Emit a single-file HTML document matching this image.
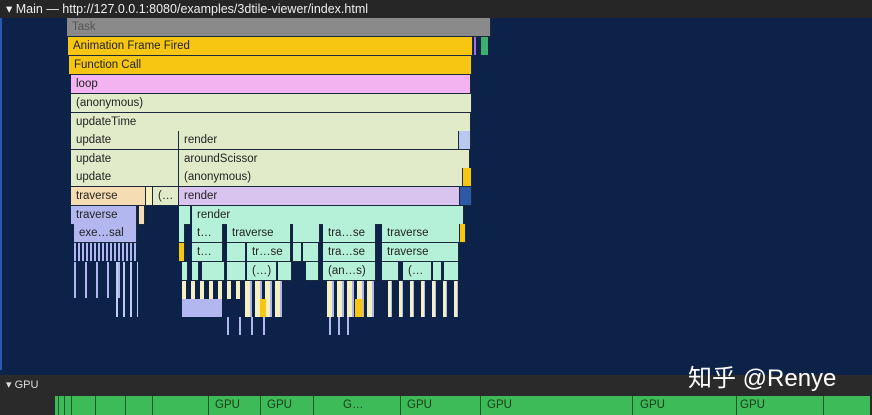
<!DOCTYPE html>
<html><head><meta charset="utf-8"><style>
body{margin:0;width:872px;height:415px;overflow:hidden;background:#0c2249;font-family:"Liberation Sans","Noto Sans CJK SC",sans-serif;position:relative}
.b{position:absolute;height:19px;box-sizing:border-box;border-right:1px solid #1a2a3a;border-bottom:1px solid #1a2a3a;font-size:11.5px;line-height:18px;color:#222;padding-left:5px;white-space:nowrap;overflow:hidden}
.v{position:absolute;width:2px}
.y{background:#f6c613}.g{background:#e2ebc9}.p{background:#f2b3f0}.l{background:#d9c3ef}.m{background:#b5f1d8}.t{background:#b3b7ef}.o{background:#f6dcb3}.c{background:#f4f0c0}
</style></head><body>
<div style="position:absolute;left:0;top:0;width:872px;height:18px;background:#262626;color:#eee;font-size:12.5px;line-height:18px;padding-left:6px">▾ Main — http://127.0.0.1:8080/examples/3dtile-viewer/index.html</div>
<div style="position:absolute;left:0;top:18px;width:2px;height:352px;background:#2a5ab0"></div>
<div class="b" style="left:67px;top:18px;width:424px;background:#8a8a8a;color:#555">Task</div>
<div class="b y" style="left:68px;top:37px;width:405px">Animation Frame Fired</div>
<div class="v" style="left:474px;top:37px;height:18px;background:#a070e0"></div>
<div class="v" style="left:481px;top:37px;height:18px;background:#3db070;width:7px"></div>
<div class="b y" style="left:69px;top:56px;width:403px">Function Call</div>
<div class="b p" style="left:71px;top:75px;width:400px">loop</div>
<div class="b g" style="left:71px;top:94px;width:401px">(anonymous)</div>
<div class="b g" style="left:71px;top:113px;width:400px">updateTime</div>
<div class="b g" style="left:71px;top:131px;width:108px">update</div>
<div class="b g" style="left:179px;top:131px;width:280px">render</div>
<div class="b" style="left:459px;top:131px;width:12px;background:#b8c8ee"></div>
<div class="b g" style="left:71px;top:150px;width:108px">update</div>
<div class="b g" style="left:179px;top:150px;width:291px">aroundScissor</div>
<div class="b g" style="left:71px;top:168px;width:108px">update</div>
<div class="b g" style="left:179px;top:168px;width:284px">(anonymous)</div>
<div class="b y" style="left:463px;top:168px;width:9px"></div>
<div class="b o" style="left:71px;top:187px;width:75px">traverse</div>
<div class="b c" style="left:146px;top:187px;width:7px"></div>
<div class="b g" style="left:153px;top:187px;width:26px">(…</div>
<div class="b l" style="left:179px;top:187px;width:281px">render</div>
<div class="b" style="left:460px;top:187px;width:12px;background:#2c5aa8"></div>
<div class="b t" style="left:71px;top:206px;width:66px">traverse</div>
<div class="b o" style="left:139px;top:206px;width:6px"></div>
<div class="b m" style="left:179px;top:206px;width:12px"></div>
<div class="b m" style="left:192px;top:206px;width:272px">render</div>
<div class="b t" style="left:74px;top:224px;width:63px">exe…sal</div>
<div class="b m" style="left:179px;top:224px;width:6px"></div>
<div class="b m" style="left:192px;top:224px;width:31px">t…</div>
<div class="b m" style="left:227px;top:224px;width:64px">traverse</div>
<div class="b m" style="left:293px;top:224px;width:27px"></div>
<div class="b m" style="left:323px;top:224px;width:53px">tra…se</div>
<div class="b m" style="left:382px;top:224px;width:78px">traverse</div>
<div class="b y" style="left:460px;top:224px;width:4px"></div>
<div class="b y" style="left:179px;top:243px;width:6px"></div>
<div class="b m" style="left:192px;top:243px;width:31px">t…</div>
<div class="b m" style="left:227px;top:243px;width:19px"></div>
<div class="b m" style="left:247px;top:243px;width:44px">tr…se</div>
<div class="b m" style="left:293px;top:243px;width:9px"></div>
<div class="b m" style="left:303px;top:243px;width:16px"></div>
<div class="b m" style="left:323px;top:243px;width:53px">tra…se</div>
<div class="b m" style="left:382px;top:243px;width:77px">traverse</div>
<div class="b m" style="left:182px;top:262px;width:5px"></div>
<div class="b m" style="left:192px;top:262px;width:7px"></div>
<div class="b m" style="left:202px;top:262px;width:23px"></div>
<div class="b m" style="left:227px;top:262px;width:19px"></div>
<div class="b m" style="left:247px;top:262px;width:30px">(…)</div>
<div class="b m" style="left:278px;top:262px;width:14px"></div>
<div class="b m" style="left:306px;top:262px;width:13px"></div>
<div class="b m" style="left:323px;top:262px;width:53px">(an…s)</div>
<div class="b m" style="left:382px;top:262px;width:17px"></div>
<div class="b m" style="left:403px;top:262px;width:29px">(…</div>
<div class="b m" style="left:433px;top:262px;width:9px"></div>
<div class="b m" style="left:444px;top:262px;width:15px"></div>
<div style="position:absolute;left:74px;top:243px;width:63px;height:18px;background:repeating-linear-gradient(90deg,#b3b7ef 0 2px,transparent 2px 4px)"></div>
<div style="position:absolute;left:74px;top:262px;width:55px;height:36px;background:repeating-linear-gradient(90deg,#b3b7ef 0 2px,transparent 2px 11px)"></div>
<div style="position:absolute;left:116px;top:262px;width:22px;height:55px;background:repeating-linear-gradient(90deg,#c0ccf0 0 2px,transparent 2px 7px)"></div>
<div style="position:absolute;left:182px;top:281px;width:70px;height:18px;background:repeating-linear-gradient(90deg,#f4f0c0 0 4px,transparent 4px 9px)"></div>
<div style="position:absolute;left:182px;top:299px;width:40px;height:18px;background:#b3b7ef"></div>
<div style="position:absolute;left:245px;top:281px;width:40px;height:36px;background:repeating-linear-gradient(90deg,#f4f0c0 0 5px,#b3b7ef 5px 7px,transparent 7px 10px)"></div>
<div style="position:absolute;left:260px;top:299px;width:6px;height:18px;background:#f6c613"></div>
<div style="position:absolute;left:227px;top:317px;width:45px;height:18px;background:repeating-linear-gradient(90deg,#b3b7ef 0 2px,transparent 2px 12px)"></div>
<div style="position:absolute;left:327px;top:281px;width:50px;height:36px;background:repeating-linear-gradient(90deg,#f4f0c0 0 5px,#b3b7ef 5px 7px,transparent 7px 10px)"></div>
<div style="position:absolute;left:355px;top:299px;width:8px;height:18px;background:#f6c613"></div>
<div style="position:absolute;left:329px;top:317px;width:20px;height:18px;background:repeating-linear-gradient(90deg,#b3b7ef 0 2px,transparent 2px 9px)"></div>
<div style="position:absolute;left:388px;top:281px;width:70px;height:36px;background:repeating-linear-gradient(90deg,#f4f0c0 0 3px,#b3b7ef 3px 4px,transparent 4px 11px)"></div>
<div style="position:absolute;left:0;top:375px;width:872px;height:40px;background:#2a2a2a"></div>
<div style="position:absolute;left:6px;top:378px;color:#ddd;font-size:11px">▾ GPU</div>
<div style="position:absolute;left:688px;top:358px;color:#fff;font-size:24px">知乎 @Renye</div>
<div style="position:absolute;left:55px;top:396px;width:815px;height:19px;background:#3cbb58"></div>
<div style="position:absolute;left:55px;top:396px;width:815px;height:19px;font-size:11.5px;line-height:19px;color:#1a3a1a">
<span style="position:absolute;left:160px">GPU</span><span style="position:absolute;left:212px">GPU</span><span style="position:absolute;left:288px">G…</span><span style="position:absolute;left:352px">GPU</span><span style="position:absolute;left:432px">GPU</span><span style="position:absolute;left:585px">GPU</span><span style="position:absolute;left:685px">GPU</span></div>
<div style="position:absolute;left:55px;top:396px;width:815px;height:19px;background:linear-gradient(90deg,transparent 3px,#1b5a2a 3px 4px,transparent 4px 9px,#1b5a2a 9px 10px,transparent 10px 16px,#1b5a2a 16px 17px,transparent 17px 40px,#1b5a2a 40px 41px,transparent 41px 70px,#1b5a2a 70px 71px,transparent 71px 97px,#1b5a2a 97px 98px,transparent 98px 153px,#1b5a2a 153px 154px,transparent 154px 205px,#1b5a2a 205px 206px,transparent 206px 258px,#1b5a2a 258px 259px,transparent 259px 345px,#1b5a2a 345px 346px,transparent 346px 425px,#1b5a2a 425px 426px,transparent 426px 577px,#1b5a2a 577px 578px,transparent 578px 681px,#1b5a2a 681px 682px,transparent 682px 768px,#1b5a2a 768px 769px,transparent 769px)"></div>
</body></html>
